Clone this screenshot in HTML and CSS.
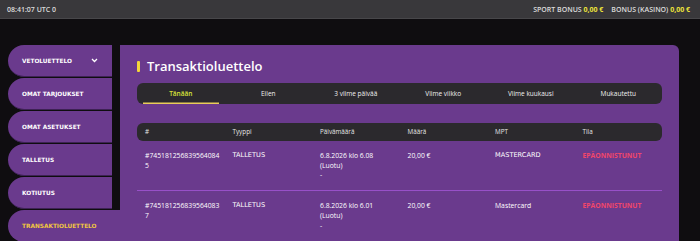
FILE: index.html
```html
<!DOCTYPE html>
<html lang="fi">
<head>
    <meta charset="UTF-8">
    <meta name="viewport" content="width=device-width, initial-scale=1.0">
    <title>Transaktioluettelo</title>
    <link rel="stylesheet" href="styles.css">
</head>
<body>

<div class="topbar">
    <span class="clock">08:41:07 UTC 0</span>
    <div class="bonuses">
        <span>SPORT BONUS <b>0,00 €</b></span>
        <span>BONUS (KASINO) <b>0,00 €</b></span>
    </div>
</div>

<div class="page">
    <!-- sivuvalikko -->
    <div class="sidebar">
        <a class="side-item" href="#">
            VETOLUETTELO
            <svg class="chevron" width="7" height="5" viewBox="0 0 7 5"><polyline points="1,1 3.5,3.5 6,1" fill="none" stroke="#fff" stroke-width="1.3"/></svg>
        </a>
        <a class="side-item" href="#">OMAT TARJOUKSET</a>
        <a class="side-item" href="#">OMAT ASETUKSET</a>
        <a class="side-item" href="#">TALLETUS</a>
        <a class="side-item" href="#">KOTIUTUS</a>
        <a class="side-item active" href="#">TRANSAKTIOLUETTELO</a>
    </div>

    <!-- sisältö -->
    <div class="main">
        <h2 class="title">Transaktioluettelo</h2>

        <div class="tabs">
            <div class="tab active">Tänään</div>
            <div class="tab">Eilen</div>
            <div class="tab">3 viime päivää</div>
            <div class="tab">Viime viikko</div>
            <div class="tab">Viime kuukausi</div>
            <div class="tab">Mukautettu</div>
        </div>

        <div class="table">
            <div class="row head">
                <div>#</div>
                <div>Tyyppi</div>
                <div>Päivämäärä</div>
                <div>Määrä</div>
                <div>MPT</div>
                <div>Tila</div>
            </div>
            <div class="row">
                <div class="id">#7451812568395640845</div>
                <div class="caps">TALLETUS</div>
                <div>6.8.2026 klo 6.08<br>(Luotu)<br>-</div>
                <div>20,00 €</div>
                <div class="caps">MASTERCARD</div>
                <div class="failed">EPÄONNISTUNUT</div>
            </div>
            <div class="row">
                <div class="id">#7451812568395640837</div>
                <div class="caps">TALLETUS</div>
                <div>6.8.2026 klo 6.01<br>(Luotu)<br>-</div>
                <div>20,00 €</div>
                <div>Mastercard</div>
                <div class="failed">EPÄONNISTUNUT</div>
            </div>
        </div>
    </div>
</div>

</body>
</html>
```

FILE: styles.css
```css
/* perusasetukset */
body {
    margin: 0;
    background-color: #0f0d10;
    font-family: "Open Sans", "DejaVu Sans", sans-serif;
    color: #fff;
    height: 241px;
    overflow: hidden;
}

/* yläpalkki */
.topbar {
    height: 18px;
    background-color: #39383b;
    border-bottom: 1px solid #48474a;
    display: flex;
    align-items: center;
    justify-content: space-between;
    padding: 0 10px 0 7px;
    font-size: 7px;
    font-weight: 600;
    color: #dcdcdc;
}

.bonuses {
    display: flex;
    gap: 8px;
}

.bonuses b {
    color: #ede43a;
    font-weight: 700;
}

.page {
    display: flex;
    gap: 8px;
    height: 222px;
    box-sizing: border-box;
    overflow: hidden;
    padding: 26px 21px 0 8px;
}

/* sivuvalikko */
.sidebar {
    width: 104px;
    flex-shrink: 0;
    display: flex;
    flex-direction: column;
    gap: 1px;
}

.side-item {
    height: 32px;
    flex-shrink: 0;
    display: flex;
    align-items: center;
    padding-left: 14px;
    background-color: #6a3a8d;
    border-radius: 16px 0 0 16px;
    border-bottom: 1px solid #3d2254;
    box-sizing: border-box;
    color: #fff;
    text-decoration: none;
    font-family: "DejaVu Sans", sans-serif;
    font-size: 5.8px;
    font-weight: 700;
}

.chevron {
    margin-left: auto;
    margin-right: 14px;
}

.side-item.active {
    margin-right: -8px;
    color: #f1c640;
    border-bottom: none;
}

/* sisältöalue */
.main {
    flex: 1;
    background-color: #6a3a8d;
    border-radius: 0 6px 0 0;
    padding: 13px 17px 0 17px;
    box-sizing: border-box;
}

.title {
    margin: 0 0 9px 0;
    font-size: 13px;
    font-weight: 600;
    line-height: 16px;
    display: flex;
    align-items: center;
    gap: 7px;
}

.title::before {
    content: "";
    width: 3px;
    height: 11px;
    border-radius: 1px;
    background-color: #f3d53a;
}

/* välilehdet */
.tabs {
    display: grid;
    grid-template-columns: repeat(6, 1fr);
    height: 21px;
    background-color: #2b292d;
    border-radius: 6px;
    margin-bottom: 19px;
}

.tab {
    display: flex;
    align-items: center;
    justify-content: center;
    font-size: 6.5px;
    color: #f0f0f0;
    margin: 0 6px;
}

.tab.active {
    color: #d9e23a;
    font-weight: 600;
    box-shadow: inset 0 -1.5px 0 #e9cd5a;
}

/* taulukko */
.row {
    display: grid;
    grid-template-columns: repeat(6, 1fr);
    font-size: 6.8px;
    line-height: 9.8px;
    padding: 10px 0;
    border-bottom: 1.5px solid #9850c8;
}

.row > div {
    padding: 0 5px 0 8px;
}

.row.head {
    background-color: #2b292d;
    border-radius: 6px;
    border-bottom: none;
    padding: 4px 0;
    color: #e6e6e6;
    font-size: 6.3px;
}

.id {
    word-break: break-all;
}

.caps {
    font-family: "DejaVu Sans", sans-serif;
    font-size: 6.6px;
}

.failed {
    color: #f0466a;
    font-weight: 700;
}
```
